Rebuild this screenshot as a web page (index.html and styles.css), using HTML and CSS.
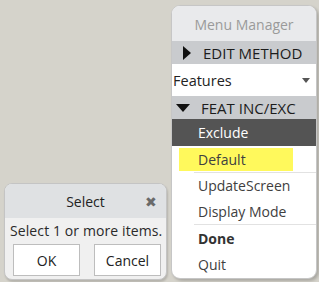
FILE: index.html
```html
<!DOCTYPE html>
<html lang="en">
    <head>
        <meta charset="UTF-8">
        <title>Menu Manager</title>
        <link rel="stylesheet" href="styles.css">
    </head>
    <body>
        <div class="desk">
            <div class="dialog">
                <div class="dialog-title">
                    <span>Select</span>
                    <span class="close">&#x2716;</span>
                </div>
                <div class="dialog-body">
                    <p>Select 1 or more items.</p>
                    <div class="dialog-btns">
                        <button>OK</button>
                        <button>Cancel</button>
                    </div>
                </div>
            </div>
            <div class="menu">
                <div class="menu-title">Menu Manager</div>
                <div class="menu-head"><span class="tri-right"></span>EDIT METHOD</div>
                <div class="menu-select">
                    <span>Features</span>
                    <span class="tri-small"></span>
                </div>
                <div class="menu-head"><span class="tri-down"></span>FEAT INC/EXC</div>
                <div class="menu-items">
                    <div class="item active">Exclude</div>
                    <div class="item"><span class="hl">Default</span></div>
                    <div class="item sep">UpdateScreen</div>
                    <div class="item">Display Mode</div>
                    <div class="item sep bold">Done</div>
                    <div class="item quit">Quit</div>
                </div>
            </div>
        </div>
    </body>
</html>
```

FILE: styles.css
```css
* {
    box-sizing: border-box;
    font-family: "Open Sans", "Noto Sans", sans-serif;
}

body {
    margin: 0;
    background: #d5d3cb;
}

.desk {
    width: 319px;
    height: 282px;
    display: flex;
    align-items: flex-start;
    padding: 5px 0 0 4px;
}

.dialog {
    width: 163px;
    margin-top: 178px;
    background: #f0f0f0;
    border: 1px solid #c4c4c4;
    border-radius: 8px;
    box-shadow: 1px 2px 2px rgba(0, 0, 0, 0.15);
    overflow: hidden;
}

.dialog-title {
    height: 34px;
    background: #dfe1e3;
    display: flex;
    align-items: center;
    justify-content: center;
    position: relative;
    font-size: 14px;
    color: #222;
}

.close {
    position: absolute;
    right: 9px;
    top: 8px;
    font-size: 14px;
    color: #6a6a6a;
}

.dialog-body {
    padding: 3px 5px 3px 5px;
}

.dialog-body p {
    margin: 0 0 4px 0;
    font-size: 14px;
    color: #2a2a2a;
    text-align: center;
    white-space: nowrap;
    letter-spacing: 0.1px;
}

.dialog-btns {
    display: flex;
    justify-content: space-between;
    padding: 0 0 0 3px;
}

.dialog-btns button {
    width: 67px;
    height: 32px;
    background: #fff;
    border: 1px solid #bdbdbd;
    font-size: 14px;
    color: #222;
}

.menu {
    width: 146px;
    height: 274px;
    margin-left: 4px;
    background: #fff;
    border: 1px solid #c6c6c6;
    border-radius: 9px;
    box-shadow: 2px 2px 3px rgba(0, 0, 0, 0.2);
    overflow: hidden;
    display: flex;
    flex-direction: column;
}

.menu-title {
    height: 35px;
    background: #e9eaec;
    color: #9a9a9a;
    font-size: 14px;
    display: flex;
    align-items: center;
    justify-content: center;
    padding-top: 2px;
}

.menu-head {
    height: 23px;
    background: #c9cbce;
    color: #1c1c1c;
    font-size: 15px;
    display: flex;
    align-items: center;
}

.tri-right {
    width: 0;
    height: 0;
    border-top: 7px solid transparent;
    border-bottom: 7px solid transparent;
    border-left: 8px solid #111;
    margin: 0 12px 0 11px;
}

.tri-down {
    width: 0;
    height: 0;
    border-left: 7px solid transparent;
    border-right: 7px solid transparent;
    border-top: 8px solid #111;
    margin: 0 11px 0 4px;
}

.menu-select {
    height: 32px;
    display: flex;
    align-items: center;
    justify-content: space-between;
    padding: 0 6px 0 1px;
    font-size: 14.5px;
    color: #222;
}

.tri-small {
    width: 0;
    height: 0;
    border-left: 4px solid transparent;
    border-right: 4px solid transparent;
    border-top: 5px solid #555;
}

.menu-items {
    display: flex;
    flex-direction: column;
}

.item {
    height: 26px;
    display: flex;
    align-items: center;
    padding-left: 26px;
    font-size: 14px;
    color: #404040;
}

.item.active {
    height: 27px;
    background: #545454;
    color: #fff;
}

.hl {
    background: #fff95c;
    margin-left: -19px;
    padding: 2px 0 2px 19px;
    width: 114px;
}

.sep {
    border-top: 1px solid #e2e2e2;
    margin-left: 22px;
    padding-left: 4px;
}

.bold {
    font-weight: bold;
    color: #333;
    padding-top: 2px;
}

.quit {
    padding-top: 2px;
}
```
